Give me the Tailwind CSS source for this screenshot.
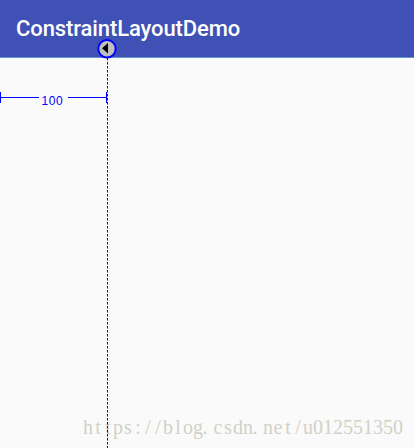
<!DOCTYPE html>
<html lang="en"><head><meta charset="utf-8"><title>ConstraintLayoutDemo</title>
<script src="https://cdn.jsdelivr.net/npm/@tailwindcss/browser@4"></script></head>
<body class="relative flex h-[448px] w-[414px] flex-col overflow-hidden bg-[#fafafa]">
<header class="flex h-[58px] shrink-0 items-center border-b border-[#6495cf] bg-[#3f51b5] pl-4 font-['Roboto',sans-serif] text-[22px] font-medium tracking-[-0.1px] text-white"><h1 class="whitespace-nowrap">ConstraintLayoutDemo</h1></header>
<main class="flex flex-1 flex-col justify-end">
<svg class="ml-[83px] mb-2 h-6 w-[322px] font-['Liberation_Serif',serif] text-[20px]" viewBox="0 0 322 24"><text text-anchor="middle" y="18" fill="#d1d1c8" x="5 15 25 35 45 55 65 75 85 95 105 115 122 135 145 155 165 172 185 195 205 215 225 235 245 255 265 275 285 295 305 315">https://blog.csdn.net/u012551350</text></svg></main>
<svg class="absolute inset-0" width="414" height="448" viewBox="0 0 414 448" shape-rendering="crispEdges">
<path d="M107.5 58V448" stroke="#00f" stroke-opacity=".5" stroke-dasharray="3 1"/>
<path d="M107.5 58V448" stroke="#00f" stroke-dasharray="2 2"/>
<path d="M0 97.5H39M68 97.5H107" stroke="#00f"/>
<path d="M.5 92V103M106.5 92V103" stroke="#00f"/>
<text x="41.500" y="105" font-size="12" letter-spacing=".6" fill="#00f" font-family="Liberation Sans">100</text>
<g shape-rendering="auto"><circle cx="107" cy="48.800" r="8.700" fill="#c0c0c0" stroke="#00f" stroke-width="2"/>
<path d="M108 43V53.500L102 48.200Z" fill="#000"/></g>
</svg>
</body></html>
